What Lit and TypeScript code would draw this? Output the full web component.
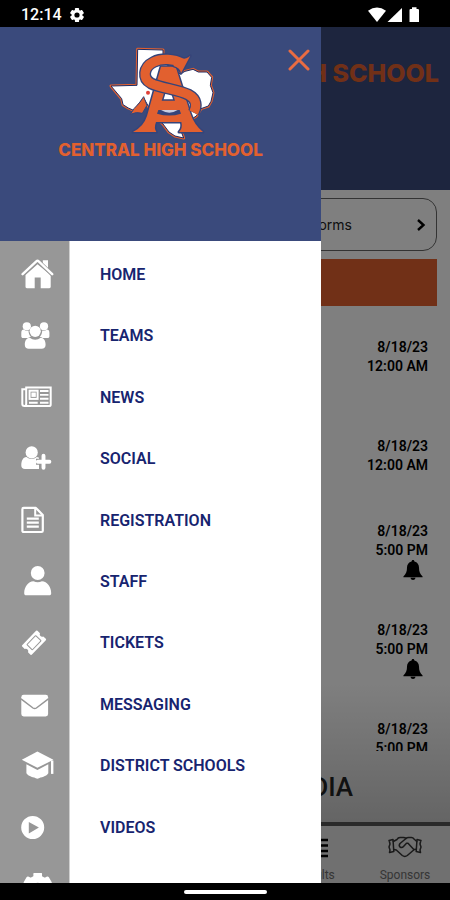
import { LitElement, html, svg, css } from "lit";
import { customElement, state } from "lit/decorators.js";

const gear = (cx: number, cy: number, r: number, hole: number) => svg`
  <g transform="translate(${cx} ${cy})">
    <mask id="gear-hole"><rect x="-40" y="-40" width="80" height="80" fill="#fff"/><circle r=${hole} fill="#000"/></mask>
    <g fill="currentColor" mask="url(#gear-hole)">
      <circle r=${r * 0.78} />
      ${[0, 60, 120].map(
        (a) => svg`<rect x=${-r * 0.3} y=${-r} width=${r * 0.6} height=${r * 2} rx=${r * 0.12} transform="rotate(${a})"/>`
      )}
    </g>
  </g>`;

const icons = {
  home: svg`<g fill="currentColor">
      <path d="M17.500 5.200 5.500 16v11.800c0 .9.6 1.400 1.400 1.400h7.800V18.500h6v10.700h8.600c.9 0 1.400-.5 1.400-1.400V16z"/>
      <path d="M22.800 1.200h5.200v9.500l-5.200-4.600z"/></g>
    <path d="M2.600 15.600 16.200 2.600q1.300-1.200 2.600 0L32.300 15.600" fill="none" stroke="#979797" stroke-width="4"/>
    <path d="M2.600 15.200 16.300 2.300q1.200-1.100 2.400 0L32.200 15.200" fill="none" stroke="currentColor" stroke-width="2.400" stroke-linecap="round"/>`,
  teams: svg`<g fill="currentColor">
      <circle cx="6.800" cy="6.300" r="4.100"/><circle cx="24" cy="6.300" r="4.100"/>
      <path d="M1.300 16.200v-3.400c0-2 1-3.200 2.700-3.200.8.900 1.800 1.300 2.900 1.300.6 0 1.100-.1 1.600-.3 0 2.500.8 4.700 2.400 6.200-1 .1-1.900.5-2.800 1.200H3.200c-1.200 0-1.900-.6-1.900-1.800z"/>
      <path d="M29.400 16.200v-3.400c0-2-1-3.200-2.700-3.200-.8.900-1.800 1.300-2.900 1.300-.6 0-1.100-.1-1.600-.3 0 2.500-.8 4.700-2.400 6.200 1 .1 1.900.5 2.800 1.200h4.900c1.200 0 1.900-.6 1.900-1.800z"/>
      <circle cx="15.200" cy="11.300" r="5.600"/>
      <path d="M4.800 24.800c0-4.200 1.700-7.100 5-7.100 1.600 1.300 3.400 2 5.400 2s3.800-.7 5.400-2c3.300 0 5 2.900 5 7.100 0 2.600-1.500 4-4 4H8.800c-2.500 0-4-1.400-4-4z"/></g>`,
  news: svg`<g fill="none" stroke="currentColor" stroke-width="2">
      <path d="M6.200 22V5.400h24.500v17c0 1.100-.6 1.700-1.700 1.700H4.400c-1.300 0-2.100-.8-2.100-2V7.300h3.900V22c0 1.200-.7 2-1.800 2"/>
      <rect x="9.600" y="8.700" width="8" height="8.200"/></g>
    <rect x="11.400" y="10.500" width="4.400" height="4.400" fill="currentColor"/>
    <path d="M20 9h8.500M20 12.900h8.500M20 16.800h8.500M9 20.700h8.700M20 20.700h8.500" stroke="currentColor" stroke-width="1.900"/>`,
  social: svg`<g fill="currentColor">
      <circle cx="11.700" cy="9.400" r="6.100"/>
      <path d="M1.300 22.500c0-4.600 1.500-8.200 5.200-8.500 1.500 1.300 3.200 1.900 5.200 1.900 1.900 0 3.600-.6 5.100-1.900.8.100 1.500.3 2.200.7V26H5c-2.400 0-3.700-1.300-3.700-3.500z"/></g>
    <path d="M23.500 11v15.400M16 18.700h14" stroke="#979797" stroke-width="6"/>
    <path d="M23.500 12.700v12M17.800 18.700h11.600" stroke="currentColor" stroke-width="3.900" stroke-linecap="round"/>`,
  registration: svg`<path d="M2.400 4.200c0-.8.5-1.300 1.300-1.300h12.200l6.900 7v15.800c0 .8-.5 1.300-1.300 1.300H3.700c-.8 0-1.300-.5-1.300-1.300z" fill="none" stroke="currentColor" stroke-width="2.200" stroke-linejoin="round"/>
    <path d="M15.200 3v7.600h7.600" fill="none" stroke="currentColor" stroke-width="2"/>
    <path d="M6.800 13.700h12M6.800 17.700h12M6.800 21.700h12" stroke="currentColor" stroke-width="2.200"/>`,
  staff: svg`<g fill="currentColor"><circle cx="17.700" cy="7" r="6.900"/>
      <path d="M4.200 27.200c0-6.600 4-11.700 9.300-12 2.600 1.400 5.800 1.400 8.400 0 5.300.3 9.300 5.400 9.300 12 0 1.400-.7 2-2 2h-23c-1.300 0-2-.6-2-2z"/></g>`,
  tickets: svg`<g transform="translate(14 15.700) rotate(-46)">
      <path d="M-10 -6.800H10q1 0 1 1V-2.300a2.400 2.400 0 0 0 0 4.600V5.800q0 1-1 1H-10q-1 0-1-1V2.300a2.400 2.400 0 0 0 0-4.600V-5.800q0-1 1-1z" fill="currentColor"/>
      <rect x="-6.300" y="-3.800" width="12.600" height="7.600" rx=".5" fill="none" stroke="#979797" stroke-width="1"/></g>`,
  messaging: svg`<rect x="1.300" y="5.800" width="26.800" height="21.600" rx="2.400" fill="currentColor"/>
    <path d="M1 9.800 13 19q1.700 1.200 3.400 0L28.400 9.800" fill="none" stroke="#979797" stroke-width="1.500"/>`,
  district: svg`<g fill="currentColor"><path d="M17.400 1.500 33.400 9.800 17.400 17.800 1.800 9.800z"/>
      <path d="M6.400 14.300 17.400 20 28.300 14.300v8.900c-2.500 3.700-6.700 3.500-10.900 5.600-4.200-2.100-8.400-1.900-11-5.600z"/>
      <path d="M31 10.500h2.400v13.400H31z"/></g>`,
  videos: svg`<path fill="currentColor" fill-rule="evenodd" d="M12.700 4a11.500 11.500 0 1 0 0 23 11.500 11.500 0 1 0 0-23zM8.800 9.900 18.900 15.600 8.800 21.500z"/>`,
  settings: gear(17.7, 13.8, 14.4, 4),
};

const MENU: { label: string; icon: keyof typeof icons }[] = [
  { label: "HOME", icon: "home" },
  { label: "TEAMS", icon: "teams" },
  { label: "NEWS", icon: "news" },
  { label: "SOCIAL", icon: "social" },
  { label: "REGISTRATION", icon: "registration" },
  { label: "STAFF", icon: "staff" },
  { label: "TICKETS", icon: "tickets" },
  { label: "MESSAGING", icon: "messaging" },
  { label: "DISTRICT SCHOOLS", icon: "district" },
  { label: "VIDEOS", icon: "videos" },
  { label: "", icon: "settings" },
];

const EVENTS = [
  { date: "8/18/23", time: "12:00 AM", alert: false },
  { date: "8/18/23", time: "12:00 AM", alert: false },
  { date: "8/18/23", time: "5:00 PM", alert: true },
  { date: "8/18/23", time: "5:00 PM", alert: true },
  { date: "8/18/23", time: "5:00 PM", alert: true },
];

@customElement("status-bar")
class StatusBar extends LitElement {
  static styles = css`
    :host {
      display: flex;
      align-items: center;
      gap: 8px;
      height: 27px;
      padding: 2px 30px 0 21px;
      box-sizing: border-box;
      background: #000;
      color: #fff;
      font: 500 16px/24px Roboto, sans-serif;
    }
    .signals { display: flex; margin-left: auto; }
    svg { display: block; }
  `;
  render() {
    return html`
      <span>12:14</span>
      <svg width="14" height="14" viewBox="0 0 14 14" aria-hidden="true">${gear(7, 7, 7, 2.6)}</svg>
      <span class="signals">
        <svg width="52" height="16" viewBox="0 0 52 16" fill="#fff" aria-hidden="true">
          <path d="M0 3.800Q9 -2.800 18 3.800L9 15z" />
          <path d="M34 1v14H19.500z" />
          <path d="M44 .3h4.500v1.600h1.300q1.200 0 1.200 1.200V15H41.500V3.100q0-1.200 1.200-1.200H44z" />
        </svg>
      </span>
    `;
  }
}

@customElement("school-page")
class SchoolPage extends LitElement {
  static styles = css`
    :host {
      display: flex;
      flex-direction: column;
      height: 100%;
      background: #fff;
      color: #000;
      font-family: Roboto, sans-serif;
    }
    .top {
      flex: none;
      height: 163px;
      padding: 32px 11px 0;
      box-sizing: border-box;
      background: #3a4a7c;
    }
    .top h1 {
      margin: 0;
      color: #e2602f;
      font: 800 25px/28px Inter, sans-serif;
      text-align: right;
      white-space: nowrap;
    }
    .forms {
      flex: none;
      display: flex;
      align-items: center;
      justify-content: flex-end;
      gap: 64px;
      height: 53px;
      margin: 8px 13px 0;
      padding: 0 10px;
      border: 1px solid #666;
      border-radius: 14px;
      background: #fff;
      color: #222;
      font: 400 14px/20px Inter, sans-serif;
    }
    .banner { flex: none; height: 47px; margin: 8px 13px 0; background: #e2602f; }
    .feed {
      flex: 1;
      min-height: 0;
      display: flex;
      flex-direction: column;
      background: linear-gradient(to top, #cacaca, #fff 140px);
    }
    .events { flex: 1; min-height: 0; overflow: hidden; margin: 0; padding: 1px 0 0; list-style: none; }
    .event {
      display: flex;
      flex-direction: column;
      align-items: flex-end;
      justify-content: center;
      height: 99px;
      padding-right: 22px;
      font: 600 14px/19px Roboto, sans-serif;
    }
    .bell { margin: 0 5px 8px 0; }
    .media {
      flex: none;
      height: 71px;
      margin: 0;
      padding-right: 97px;
      color: #222;
      font: 500 26px/72px Roboto, sans-serif;
      text-align: right;
    }
    .tabs {
      flex: none;
      display: grid;
      grid-template-columns: repeat(5, 1fr);
      height: 57px;
      border-top: 4px solid #555;
      background: #e0e0e0;
    }
    .tab {
      display: flex;
      flex-direction: column;
      align-items: center;
      gap: 8px;
      padding-top: 9px;
      color: #6c6c6c;
      font: 400 12px/16px Roboto, sans-serif;
      text-decoration: none;
    }
    .results { grid-column: 4; }
    svg { display: block; }
  `;
  render() {
    return html`
      <header class="top"><h1>HIGH SCHOOL</h1></header>
      <button class="forms" type="button">
        <span>Forms</span>
        <svg width="10" height="14" viewBox="0 0 10 14" fill="none" stroke="#000" stroke-width="2.400" aria-hidden="true">
          <path d="M2 2l5.500 5L2 12" />
        </svg>
      </button>
      <div class="banner"></div>
      <section class="feed">
        <ul class="events">
          ${EVENTS.map(
            (e) => html`<li class="event">
              <span>${e.date}</span><span>${e.time}</span>
              ${e.alert
                ? html`<svg class="bell" width="20" height="20" viewBox="0 0 20 20" aria-hidden="true">
                    <path d="M10 0c.9 0 1.400.6 1.400 1.500 3 .7 4.600 3 4.600 6.100 0 4 .9 6.500 3.600 8.900v.7H.4v-.7C3.100 14.100 4 11.600 4 7.600c0-3.100 1.600-5.400 4.600-6.100C8.600.6 9.100 0 10 0zM7.500 17.800h5c-.3 1.400-1.200 2.200-2.500 2.200s-2.200-.8-2.500-2.200z" />
                  </svg>`
                : ""}
            </li>`
          )}
        </ul>
        <h2 class="media">MEDIA</h2>
      </section>
      <nav class="tabs">
        <a class="tab results" href="#results">
          <svg width="26" height="24" viewBox="0 0 26 24" stroke="#000" stroke-width="2.400" aria-hidden="true">
            <path d="M0 5h26M0 10.500h26M0 16h26M0 21h26" />
          </svg>
          Results
        </a>
        <a class="tab" href="#sponsors">
          <svg width="34" height="24" viewBox="0 0 34 24" fill="none" stroke="#333" stroke-width="1.500" stroke-linejoin="round" stroke-linecap="round" aria-hidden="true">
            <path d="M1 5.500 5 4.500 5.800 16.500 1.500 17.500M33 5.500 29 4.500 28.200 16.500 32.500 17.500M1.200 5.500 2 9 1 12l1 3-.5 2.500M32.800 5.500 32 9l1 3-1 3 .5 2.500" />
            <path d="M5.300 6.500 9 4.500q1-2 3-2h3.500q1.500 0 2.500 1 1-1 2.500-1h3q1.500 0 2.500 1.500l2.800 2.500M5.800 14.500l2.500.5 6 5.500q2.500 1.800 5 0l7-6 2-.2" />
            <path d="M18 3.500 12 8.500q-1.500 2 0 3.500 2 1.200 3.500-.5l3-3.300h1.500l5.800 6.300" />
          </svg>
          Sponsors
        </a>
      </nav>
    `;
  }
}

@customElement("school-crest")
class SchoolCrest extends LitElement {
  static styles = css`
    :host { display: block; width: 120px; height: 100px; }
    svg { display: block; }
  `;
  render() {
    const texas =
      "M110 22 186 24 186 60 238 96 252 88 276 82 292 90 318 90 332 106 328 130 336 152 330 178 322 192 300 200 286 222 246 248 238 262 248 288 222 282 204 270 186 246 160 224 128 168 112 186 100 206 82 198 66 188 62 170 30 132 108 130z";
    const s = "M245 64 C218 50 182 48 158 60 C126 76 124 110 150 124 C180 139 232 142 262 158 C288 172 288 192 278 212";
    const serif = "M216 46 Q250 58 268 41 L240 94 Q238 78 218 72z";
    const a =
      "M180 74H224L268 214Q280 250 306 270H234Q246 258 241 240H165Q158 258 166 270H96Q128 254 138 222zM190 150 182 176H222L214 150z";
    return html`
      <svg width="120" height="100" viewBox="0 0 360 300" stroke-linejoin="round" aria-hidden="true">
        <path d=${texas} fill="#e2602f" stroke="#e2602f" stroke-width="9" />
        <path d=${texas} fill="#fff" stroke="#1f2b63" stroke-width="3" />
        <path d="M128 164 114 184Q98 198 88 217Q106 208 124 214L138 190z" fill="#e2602f" stroke="#35447a" stroke-width="3" />
        <circle cx="141" cy="152" r="6" fill="#e04038" />
        <path d=${a} fill="#e2602f" stroke="#35447a" stroke-width="9" fill-rule="evenodd" paint-order="stroke" />
        <path d="M172 204H236L240 215Q205 226 168 215z" fill="#35447a" />
        <path d="M180 204H230Q205 220 180 204z" fill="#c8cde0" />
        <path d=${s} fill="none" stroke="#35447a" stroke-width="36" />
        <path d=${serif} fill="#35447a" stroke="#35447a" stroke-width="8" />
        <path d=${s} fill="none" stroke="#e2602f" stroke-width="28" />
        <path d=${serif} fill="#e2602f" />
      </svg>
    `;
  }
}

@customElement("menu-drawer")
class MenuDrawer extends LitElement {
  static styles = css`
    :host {
      display: flex;
      flex-direction: column;
      overflow: hidden;
      background: #fff;
      font-family: Roboto, sans-serif;
    }
    .head {
      position: relative;
      flex: none;
      display: flex;
      flex-direction: column;
      align-items: center;
      height: 214px;
      padding-top: 15px;
      box-sizing: border-box;
      background: #3a4a7c;
    }
    .name {
      margin: 0;
      color: #e2602f;
      font: 800 17px/16px Inter, sans-serif;
      white-space: nowrap;
    }
    .close {
      position: absolute;
      top: 22px;
      right: 11px;
      width: 22px;
      height: 22px;
      padding: 0;
      border: 0;
      background: none;
      color: #ea6c42;
    }
    nav {
      flex: none;
      background: linear-gradient(to right, #979797 69px, #cfcfcf 69px, #cfcfcf 70px, #fff 70px);
    }
    .menu {
      display: grid;
      grid-auto-rows: 1fr;
      min-height: 676px;
      margin: 0;
      padding: 3px 0 0;
      list-style: none;
    }
    .item {
      display: grid;
      grid-template-columns: 70px 1fr;
      align-items: center;
      height: 100%;
      color: #17246f;
      font: 600 16px/20px Roboto, sans-serif;
      text-decoration: none;
    }
    .icon { padding-left: 20px; color: #fff; }
    .label { padding-left: 30px; }
    svg { display: block; }
  `;
  render() {
    return html`
      <header class="head">
        <school-crest></school-crest>
        <h2 class="name">CENTRAL HIGH SCHOOL</h2>
        <button class="close" type="button" aria-label="Close menu" @click=${() => this.dispatchEvent(new Event("dismiss"))}>
          <svg width="22" height="22" viewBox="0 0 22 22" stroke="currentColor" stroke-width="3" stroke-linecap="round" aria-hidden="true">
            <path d="M2 2l18 18M20 2 2 20" />
          </svg>
        </button>
      </header>
      <nav>
        <ul class="menu">
          ${MENU.map(
            (m) => html`<li>
              <a class="item" href="#${m.icon}" aria-label=${m.label || "Settings"}>
                <span class="icon"><svg width="36" height="32" viewBox="0 0 36 32" aria-hidden="true">${icons[m.icon]}</svg></span>
                <span class="label">${m.label}</span>
              </a>
            </li>`
          )}
        </ul>
      </nav>
    `;
  }
}

@customElement("app-root")
class AppRoot extends LitElement {
  static styles = css`
    :host { display: flex; flex-direction: column; height: 100vh; background: #000; }
    .stage { position: relative; flex: 1; min-height: 0; overflow: hidden; }
    .scrim { position: absolute; inset: 0; background: rgba(0, 0, 0, 0.5); }
    .drawer { position: absolute; inset: 0 129px 0 0; }
    .gestures { flex: none; display: flex; align-items: center; justify-content: center; height: 17px; }
    .pill { width: 83px; height: 4px; border-radius: 2px; background: #fff; }
  `;
  @state() private open = true;

  render() {
    return html`
      <status-bar></status-bar>
      <main class="stage">
        <school-page></school-page>
        ${this.open
          ? html`<div class="scrim"></div>
              <menu-drawer class="drawer" @dismiss=${() => (this.open = false)}></menu-drawer>`
          : ""}
      </main>
      <div class="gestures"><div class="pill"></div></div>
    `;
  }
}
